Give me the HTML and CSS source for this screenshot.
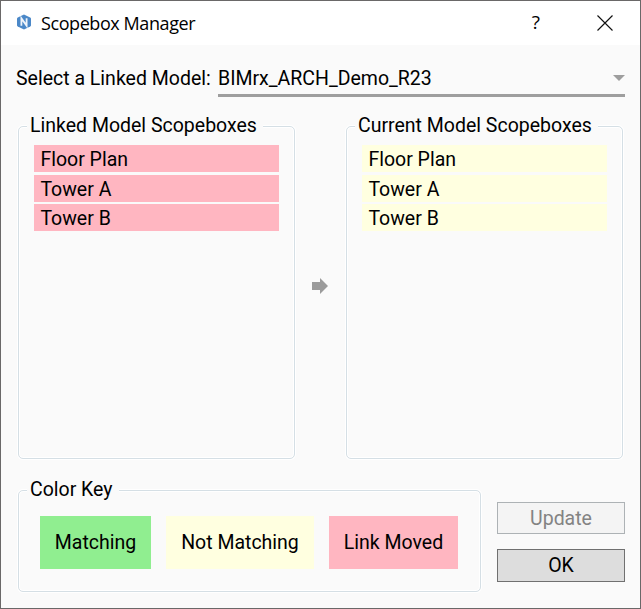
FILE: index.html
```html
<!DOCTYPE html>
<html lang="en">
<head>
<meta charset="utf-8">
<title>Scopebox Manager</title>
<link rel="stylesheet" href="styles.css">
</head>
<body>
<main class="window">
  <header class="titlebar">
    <svg class="logo" width="16" height="16" viewBox="0 0 16 16">
      <path d="M8 .6 14.2 3.6Q15 4 15 4.8V11.2Q15 12 14.2 12.4L8 15.4 1.8 12.4Q1 12 1 11.2V4.8Q1 4 1.8 3.6Z" fill="#4b88c8"/>
      <path d="M5.4 11.8V4.4L10.6 11.6V4.2" fill="none" stroke="#f0f4fa" stroke-width="1.8"/>
    </svg>
    <h1 class="title">Scopebox Manager</h1>
    <span class="help">?</span>
    <svg class="close" width="16" height="16" viewBox="0 0 16 16"><path d="M.5.5 15.5 15.5M15.5.5.5 15.5" stroke="#111" stroke-width="1.15"/></svg>
  </header>
  <div class="picker">
    <span class="picker-label">Select a Linked Model:</span>
    <div class="combo">
      <span class="combo-value">BIMrx_ARCH_Demo_R23</span>
      <svg class="caret" width="12" height="6" viewBox="0 0 12 6"><path d="M0 0H12L6 6Z" fill="#9e9e9e"/></svg>
    </div>
  </div>
  <div class="lists">
    <fieldset class="group">
      <legend>Linked Model Scopeboxes</legend>
      <ul class="rows moved"><li>Floor Plan</li><li>Tower A</li><li>Tower B</li></ul>
    </fieldset>
    <svg class="arrow" width="16" height="16" viewBox="0 0 16 16"><path d="M0 4H8V0L16 8 8 16V12H0Z" fill="#9b9b9b"/></svg>
    <fieldset class="group">
      <legend>Current Model Scopeboxes</legend>
      <ul class="rows unmatched"><li>Floor Plan</li><li>Tower A</li><li>Tower B</li></ul>
    </fieldset>
  </div>
  <footer class="footer">
    <fieldset class="group key">
      <legend>Color Key</legend>
      <div class="chips">
        <span class="chip chip-match">Matching</span>
        <span class="chip chip-unmatched">Not Matching</span>
        <span class="chip chip-moved">Link Moved</span>
      </div>
    </fieldset>
    <div class="actions">
      <button class="update" disabled>Update</button>
      <button class="ok">OK</button>
    </div>
  </footer>
</main>
</body>
</html>
```
FILE: styles.css
```css
* { box-sizing: border-box; }

body {
  margin: 0;
  font: 19.5px/24px Roboto, sans-serif;
  color: #000;
}

.window {
  width: 641px;
  height: 609px;
  border: 1px solid #6a6868;
  background: #fafafa;
  overflow: hidden;
}

.titlebar {
  display: flex;
  align-items: center;
  height: 44px;
  padding: 0 27px 0 15px;
  background: #fff;
}

.logo { margin-bottom: 2px; }

.title {
  flex: 1;
  margin: 0 0 0 9px;
  font: 400 18px/24px "Open Sans", sans-serif;
  letter-spacing: -0.42px;
}

.help {
  margin: 0 57px 2px 0;
  font: 19px/24px "Open Sans", sans-serif;
}

.close { margin-bottom: 1px; }

.picker {
  display: flex;
  height: 52px;
  padding: 15px 15px 0;
}

.picker-label { width: 202px; padding-top: 7px; white-space: nowrap; }

.combo {
  flex: 1;
  display: flex;
  justify-content: space-between;
  padding-top: 7px;
  border-bottom: 3px solid #9e9e9e;
}

.caret { margin-top: 8px; }

.lists {
  display: flex;
  align-items: center;
  justify-content: space-between;
  height: 345px;
  margin: 17px 17px 0;
}

.group {
  width: 277px;
  min-width: 0;
  height: 345px;
  margin: 0;
  padding: 0 15px;
  border: 1px solid #d5dfe5;
  border-radius: 5px;
  box-shadow: 0 0 0 1px #fff, inset 0 0 0 1px #fff;
}

legend {
  height: 24px;
  margin-left: -7px;
  padding: 0 6px 0 3px;
  background: #fafafa;
  white-space: nowrap;
}

.arrow { margin: 0 2px 2px 0; }

.rows {
  display: grid;
  gap: 2.5px;
  margin: 7px 0 0;
  padding: 0;
  list-style: none;
}

.rows li {
  height: 27px;
  padding-left: 6.4px;
  line-height: 29px;
}

.moved li, .chip-moved { background: #ffb6c1; }
.unmatched li, .chip-unmatched { background: #ffffe0; }
.chip-match { background: #90ee90; }

.footer {
  display: flex;
  justify-content: space-between;
  margin: 19px 15px 0 17px;
}

.key { width: 463px; height: 114px; padding: 0 21px; }
.key legend { margin-left: -13px; }

.chips {
  display: flex;
  gap: 15px;
  margin-top: 14px;
}

.chip {
  height: 53px;
  line-height: 53px;
  text-align: center;
  white-space: nowrap;
}

.chip-match { width: 111px; }
.chip-unmatched { width: 148px; }
.chip-moved { width: 129px; }

.actions {
  display: grid;
  grid-template-rows: 32px 33px;
  gap: 15px;
  align-content: start;
  width: 128px;
  padding-top: 24px;
}

button {
  padding: 0;
  border: 1px solid #707070;
  background: #ddd;
  font: inherit;
  color: #000;
}

.update {
  padding-top: 2px;
  border-color: #adb2b5;
  background: #f4f4f4;
  color: #838383;
}
```
